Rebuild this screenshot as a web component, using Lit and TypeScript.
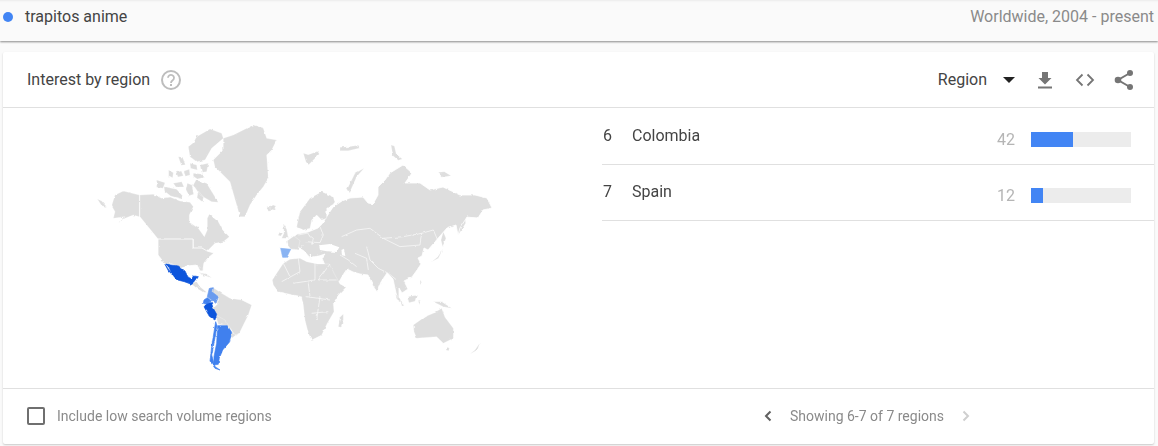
import { LitElement, html, css, svg } from "lit";
import { customElement } from "lit/decorators.js";

const Z = {
  a: "translate(90 115) scale(.3333)",
  b: "translate(290 115) scale(.3333)",
  d: "translate(240 200) scale(.3333)",
  e: "translate(400 230) scale(.3333)",
  f: "translate(270 170) scale(.3333)",
  s: "translate(150 255) scale(.3333)",
};

const eurasia =
  "M290 240L297 234 308 232 318 228 322 224 333 207 342 201 350 198 363 197 368 203 373 204 378 195 378 187 385 180 390 173 403 165 412 173 405 183 420 183 430 190 443 187 460 195 475 195 487 198 492 208 483 210 478 218 467 217 460 228 458 235 456 225 447 228 440 236 434 243 428 250 424 248 422 256 418 258 421 264 417 270 412 277 404 281 408 289 402 293 399 288 399 298 405 306 399 302 396 293 393 279 387 273 381 282 377 292 373 286 368 275 360 274 353 272 347 269 343 275 339 282 332 284 329 276 326 268 322 258 325 254 319 256 313 257 310 254 312 260 304 251 298 247 292 250 288 246Z";

const usa = "M158 239L193 239 193 248 202 248 207 251 214 253 208 258 204 263 203 271 200 271 197 265 187 266 181 269 172 264 165 264 158 255Z";

const mapArt = svg`
<g class="warp">
<g class="land" transform=${Z.a}>
  <path d="M22 252L35 258 50 275 35 272ZM75 240L100 228 148 240 148 305 130 300 105 310 85 325 105 305 70 310 75 290 65 272Z"/>
  <path d="M150 240L190 238 215 250 240 246 270 258 300 262 310 275 298 300 298 322 325 340 343 365 352 345 352 310 358 298 385 320 398 345 418 365 400 380 375 385 350 410 335 400 310 400 310 373 205 373 150 305Z"/>
  <path d="M200 195L225 203 219 220 200 217ZM222 215L260 223 280 245 272 251 242 243 224 229ZM236 165L250 173 248 188 236 182ZM258 172L274 168 280 182 264 186ZM282 168L298 163 300 180 286 184ZM310 175L332 177 344 187 322 192 310 184ZM265 125L278 127 286 149 274 151ZM318 195L350 205 385 262 365 260 330 240 310 210ZM292 205L306 210 311 238 297 242 288 224ZM325 228L341 246 337 260 321 248ZM250 205L275 200 282 216 258 216ZM300 145L320 150 322 165 302 160ZM330 150L355 145 350 170 335 172Z"/>
  <path d="M320 65L360 42 395 55 400 70 365 100 345 135 320 140 300 125 295 95 310 83Z"/>
  <path d="M400 70L430 60 490 30 520 40 530 70 560 75 545 105 530 120 535 190 520 215 500 240 480 270 465 305 450 305 440 270 420 200 375 155 370 135 400 105Z"/>
  <path d="M530 275L552 270 557 284 535 289Z"/>
</g>
<path class="land" d=${usa}/>
<g class="land" transform=${Z.b}>
  <path d="M40 115L55 119 83 109 88 117 68 137 56 149 48 141ZM150 97L175 95 205 91 210 99 175 107 150 107ZM303 90L313 93 319 118 337 132 325 136 309 122Z"/>
  <path d="M222 160L195 175 170 225 180 230 200 185ZM445 172L463 170 483 182 461 186ZM460 350L468 370 458 395 453 375ZM505 360L510 325 525 305 527 325Z"/>
</g>
<path class="land" d=${eurasia}/>
<g class="land" transform=${Z.f}>
  <path d="M80 170L90 125 120 85 155 65 190 80 195 100 170 115 170 145 155 150 140 135 125 150 120 175 100 180Z"/>
  <path d="M40 160L50 178 55 205 35 205 42 190ZM30 185L38 190 32 198 24 196ZM5 105L18 108 8 122 0 118Z"/>
  <path d="M52 212L72 198 90 212 84 240 62 236 54 226Z"/>
</g>
<g class="land" transform=${Z.d}>
  <path d="M130 190L150 178 180 175 200 185 232 192 268 192 285 225 300 252 318 262 295 285 280 310 282 335 262 370 245 405 215 420 205 400 195 360 190 315 185 290 150 283 115 275 100 255 97 240 110 220Z"/>
  <path d="M295 380L300 352 310 342 310 360 303 382Z"/>
  <path d="M466 282L480 296 486 310 472 298Z"/>
</g>
<g class="land" transform=${Z.e}>
  <path d="M40 285L75 260 100 250 125 235 135 262 160 295 160 325 130 340 110 320 50 325 42 305Z"/>
  <path d="M100 215L125 215 155 235 130 230ZM140 352L148 354 146 362 138 360ZM210 372L225 360 240 338 232 360ZM130 55L115 85 95 95 113 81ZM22 200L50 196 45 214 27 218ZM55 210L62 212 59 224ZM60 152L65 160 61 164ZM0 210L12 228 6 228Z"/>
</g>
<g class="land" transform=${Z.s}>
  <path d="M122 85L140 80 150 95 170 112 160 112 140 100ZM145 52L170 58 185 68 165 62Z"/>
  <path d="M190 98L215 115 240 130 275 135 305 150 295 180 280 210 268 235 255 240 240 220 225 205 200 185 190 160 205 145 205 125 188 112Z"/>
  <path d="M197 180L225 195 245 225 232 212 205 208ZM245 232L258 240 245 250Z"/>
</g>
<g class="whites" transform=${Z.f}>
  <path d="M147 226L180 222 208 232 200 246 170 244 150 240ZM214 240L222 236 226 258 216 256Z"/>
</g>
<g class="lines" transform=${Z.d}>
  <path d="M175 175L180 215 125 245M225 190L225 240 160 250M270 192L235 240 290 240M200 290L270 300M215 340L265 335M205 250L210 290M240 290L230 360M130 190L150 230M300 165L325 180 350 200M345 160L380 175 385 210M380 140L390 180 415 205 445 220 470 240"/>
</g>
<g class="lines" transform=${Z.b}>
  <path d="M155 365L200 345 240 340 280 370 340 365 395 355 430 345 445 380 M280 370L330 395 390 390 395 355"/>
</g>
<g class="lines" transform=${Z.f}>
  <path d="M85 195L110 190 130 205 125 225M105 215L150 218 160 195M100 225L88 240M150 170L160 195"/>
</g>
<g class="light" transform=${Z.f}><path d="M32 235L62 238 50 262 38 262 35 248Z"/></g>
<g class="soft" transform=${Z.s}>
  <path d="M178 100L190 98 188 112 205 125 198 145 185 135 172 125Z"/>
</g>
<g class="mid" transform=${Z.s}>
  <path d="M203 212L232 212 245 232 238 262 218 285 208 310 205 328 192 330 192 305 200 265Z"/>
  <path d="M197 200L201 212 192 265 185 300 195 335 210 345 195 340 180 318 185 275Z"/>
  <path d="M162 135L172 128 183 137 170 148 160 145Z"/>
</g>
<g class="dark" transform=${Z.s}>
  <path d="M45 25L62 30 85 33 105 48 114 66 125 72 130 63 142 65 132 80 122 87 103 80 80 74 64 54 58 38ZM45 28L52 38 68 60 55 47Z"/>
  <path d="M170 148L183 140 190 160 200 178 195 195 178 184 162 155Z"/>
</g>
</g>`;

@customElement("app-root")
export class AppRoot extends LitElement {
  static styles = css`
    :host { display: block; width: 1158px; height: 446px; background: #fafafa; overflow: hidden; font-family: Roboto, "Liberation Sans", sans-serif; color: #333; }
    .top { height: 41px; box-sizing: border-box; padding: 0 4px 8px 3px; display: flex; align-items: center; justify-content: space-between; font-size: 16px; box-shadow: 0 1px 2px rgba(0,0,0,.45), inset 0 3px 3px -3px rgba(0,0,0,.12); background: #fafafa; position: relative; }
    .term { display: flex; align-items: center; gap: 12px; color: #444; }
    .dot { width: 10px; height: 10px; border-radius: 50%; background: #4285f4; }
    .scope { color: #8a8a8a; }
    .card { margin: 11px 4px 0 3px; height: 392px; background: #fff; box-shadow: 0 1px 2px rgba(0,0,0,.2); display: flex; flex-direction: column; border-radius: 2px; }
    .head { height: 56px; flex: none; box-sizing: border-box; border-bottom: 1px solid #e0e0e0; display: flex; align-items: center; padding: 0 20px 0 24px; font-size: 16px; }
    .title { color: #444; }
    .help { margin-left: 10px; display: block; }
    .spacer { flex: 1; }
    .sel { color: #444; }
    .caret { width: 0; height: 0; border: 6px solid transparent; border-top: 6px solid #222; border-bottom: 0; margin: 0 22px 0 16px; }
    .ico { display: block; }
    .code { margin-left: 22px; }
    .share { margin-left: 19px; }
    .body { flex: 1; display: flex; min-height: 0; }
    .map { width: 599px; height: 280px; display: block; flex: none; }
    .map .warp { filter: url(#coast); }
    .map .land { fill: #dedede; stroke: #fff; stroke-width: .8; stroke-linejoin: round; }
    .map .whites { fill: #fff; }
    .map .lines { fill: none; stroke: #fff; stroke-width: 1.8; }
    .map .dark { fill: #0c55dc; stroke: #0c55dc; stroke-width: 2; stroke-linejoin: round; }
    .map .mid { fill: #3f80ee; stroke: #3f80ee; stroke-width: 2; stroke-linejoin: round; }
    .map .soft { fill: #6a9bee; stroke: #6a9bee; stroke-width: 2; stroke-linejoin: round; }
    .map .light { fill: #8ab4f3; stroke: #8ab4f3; stroke-width: 2; stroke-linejoin: round; }
    .rows { flex: 1; font-size: 16px; padding-top: 1px; }
    .row { height: 56px; box-sizing: border-box; border-bottom: 1px solid #e0e0e0; display: flex; padding: 0 23px 0 1px; }
    .rank { width: 29px; padding-top: 17px; color: #444; }
    .name { flex: 1; padding-top: 17px; color: #444; }
    .val { font-size: 16px; color: #b5b5b5; padding-top: 21px; margin-right: 16px; }
    .track { width: 100px; height: 15px; background: #ececec; margin-top: 23px; }
    .fill { height: 100%; background: #4285f4; }
    .foot { height: 56px; flex: none; box-sizing: border-box; border-top: 1px solid #e0e0e0; display: flex; align-items: center; padding: 0 0 2px 24px; font-size: 14px; color: #8a8a8a; }
    .check { width: 14px; height: 14px; border: 2px solid #6f6f6f; border-radius: 2px; margin-right: 12px; }
    .pager { margin-left: auto; margin-right: 183px; display: flex; align-items: center; gap: 17px; }
  `;

  render() {
    const rows = [
      { rank: 6, name: "Colombia", v: 42 },
      { rank: 7, name: "Spain", v: 12 },
    ];
    return html`
      <div class="top">
        <div class="term"><span class="dot"></span><span>trapitos anime</span></div>
        <div class="scope">Worldwide, 2004 - present</div>
      </div>
      <div class="card">
        <div class="head">
          <span class="title">Interest by region</span>
          <svg class="help" width="22" height="22" viewBox="0 0 22 22">
            <circle cx="11" cy="11" r="9" fill="none" stroke="#bdbdbd" stroke-width="2"/>
            <path d="M8 8.8a3 3 0 1 1 4.7 2.5c-1 .7-1.7 1.2-1.7 2.7" fill="none" stroke="#bdbdbd" stroke-width="1.8"/>
            <rect x="10" y="15" width="2" height="2" fill="#bdbdbd"/>
          </svg>
          <span class="spacer"></span>
          <span class="sel">Region</span>
          <span class="caret"></span>
          <svg class="ico" width="16" height="18" viewBox="0 0 16 18">
            <path d="M5 1h6v6h3.500L8 13.500 1.500 7H5z" fill="#757575"/>
            <rect x="1" y="15.500" width="14" height="2" fill="#757575"/>
          </svg>
          <svg class="ico code" width="20" height="14" viewBox="0 0 20 14">
            <path d="M7.500 1.500L2 7l5.500 5.500M12.500 1.500L18 7l-5.500 5.500" fill="none" stroke="#757575" stroke-width="1.800"/>
          </svg>
          <svg class="ico share" width="20" height="22" viewBox="0 0 20 22">
            <path d="M16 4L4 11l12 7" fill="none" stroke="#757575" stroke-width="2"/>
            <circle cx="16" cy="4" r="3" fill="#757575"/><circle cx="4" cy="11" r="3.300" fill="#757575"/><circle cx="16" cy="18" r="3" fill="#757575"/>
          </svg>
        </div>
        <div class="body">
          <svg class="map" viewBox="3 108 599 280">
            <defs>
              <filter id="coast" filterUnits="userSpaceOnUse" x="3" y="108" width="599" height="280">
                <feTurbulence type="fractalNoise" baseFrequency="0.2" numOctaves="2" seed="4" result="n"/>
                <feDisplacementMap in="SourceGraphic" in2="n" scale="2.500" xChannelSelector="R" yChannelSelector="G"/>
                <feGaussianBlur stdDeviation="0.3"/>
              </filter>
            </defs>
            ${mapArt}
          </svg>
          <div class="rows">
            ${rows.map(r => html`
              <div class="row">
                <span class="rank">${r.rank}</span>
                <span class="name">${r.name}</span>
                <span class="val">${r.v}</span>
                <div class="track"><div class="fill" style="width:${r.v}%"></div></div>
              </div>`)}
          </div>
        </div>
        <div class="foot">
          <span class="check"></span>
          <span>Include low search volume regions</span>
          <div class="pager">
            <svg width="10" height="12" viewBox="0 0 10 12"><path d="M7.500 1.500L3 6l4.500 4.500" fill="none" stroke="#616161" stroke-width="2"/></svg>
            <span>Showing 6-7 of 7 regions</span>
            <svg width="10" height="12" viewBox="0 0 10 12"><path d="M2.500 1.500L7 6l-4.500 4.500" fill="none" stroke="#cfcfcf" stroke-width="2"/></svg>
          </div>
        </div>
      </div>
    `;
  }
}
